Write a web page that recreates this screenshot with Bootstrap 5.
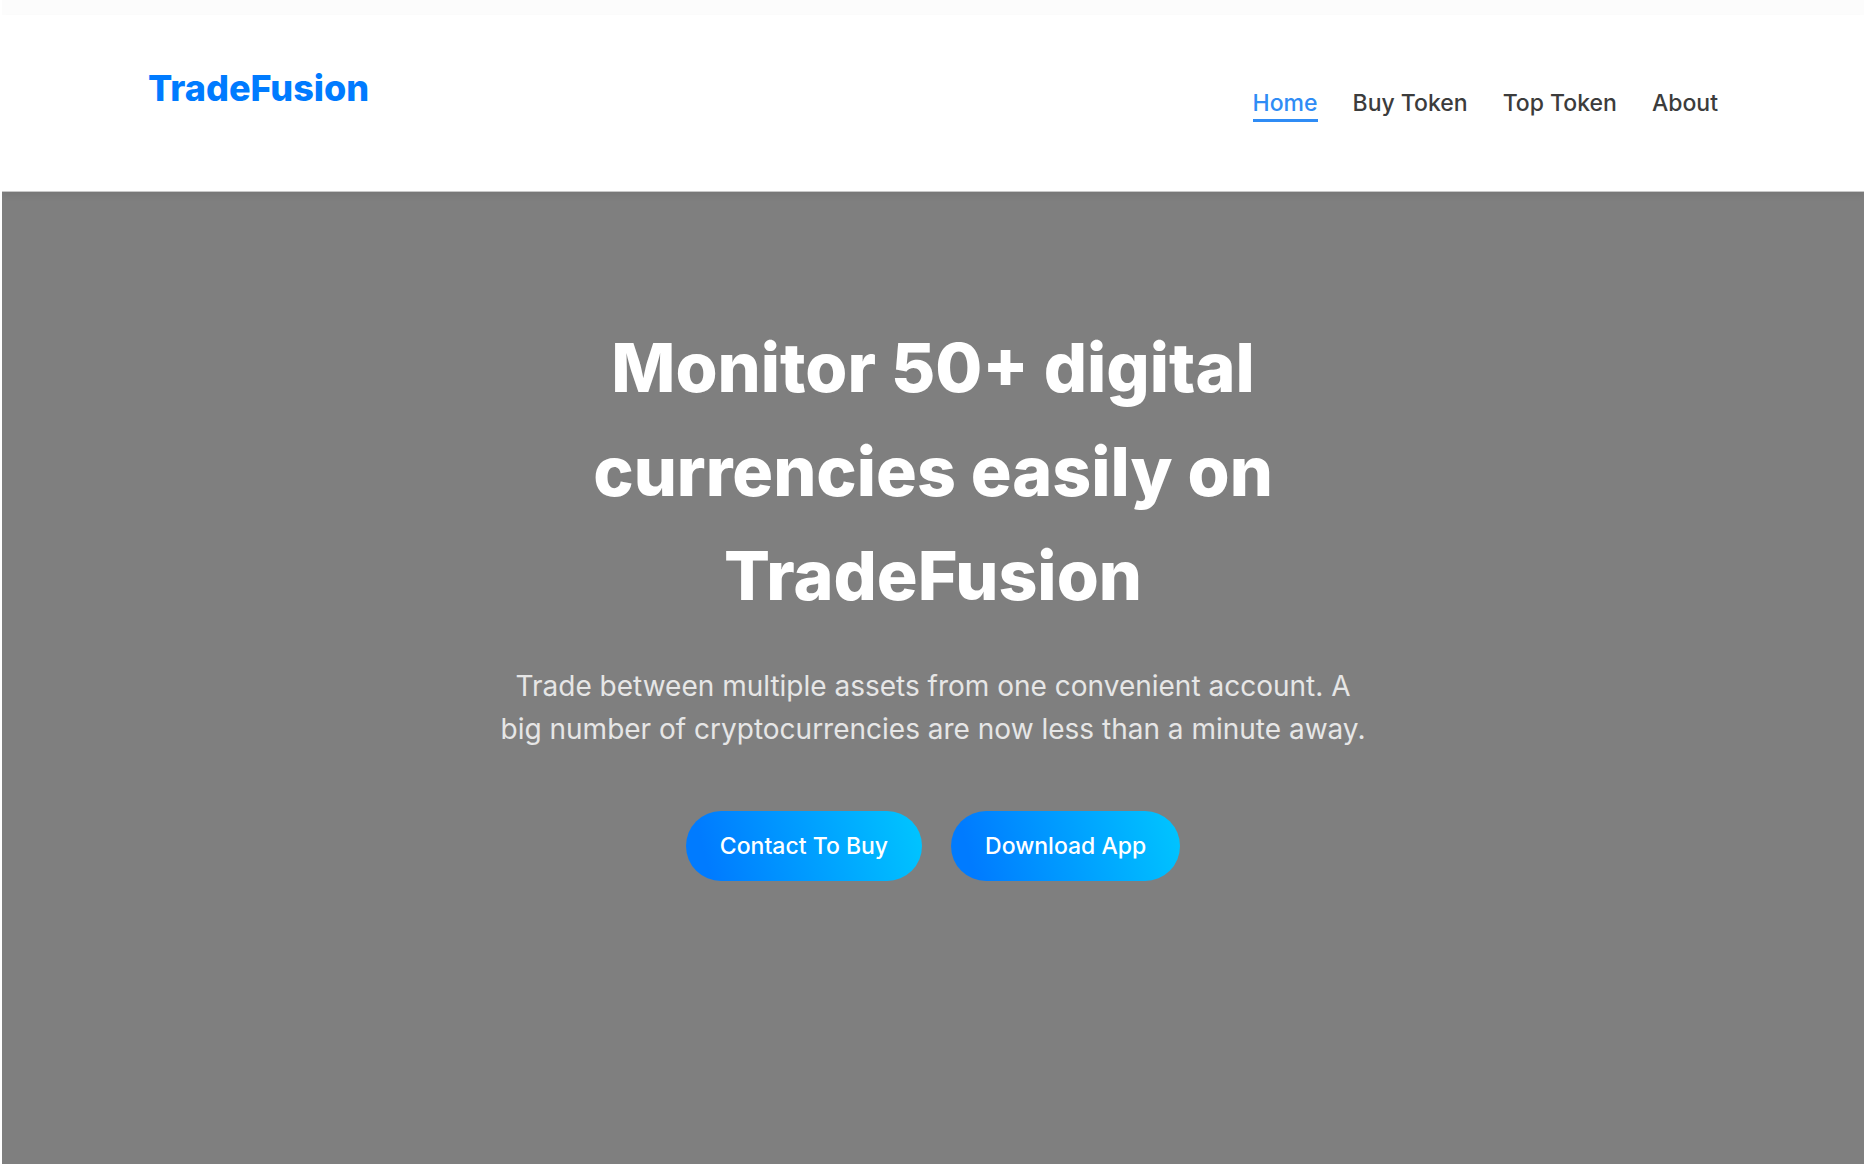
<!DOCTYPE html>
<html lang="en">
<head>
<meta charset="utf-8">
<meta name="viewport" content="width=device-width, initial-scale=1">
<title>TradeFusion</title>
<link href="https://cdn.jsdelivr.net/npm/bootstrap@5.3.0/dist/css/bootstrap.min.css" rel="stylesheet">
<style>
body{font-family:Inter,sans-serif;background:#7f7f7f;min-height:100vh;border:solid #fff;border-width:0 2px}
.top-strip{height:15px;background:#fcfcfc}
.site-header{padding:46px 146px 69px;background:#fff;border-bottom:1px solid #c8c8c8;box-shadow:0 4px 6px rgba(0,0,0,.06)}
.brand-link{font-size:36px;line-height:54px;font-weight:800;color:#007bff;text-decoration:none}
.site-nav{gap:35px;margin-top:26px}
.site-nav .nav-link{padding:0;font-size:23px;line-height:32px;font-weight:500;color:#3c3c3c;border-bottom:3px solid transparent}
.site-nav .nav-link.active{color:#2f8cf5;border-color:#2f8cf5}
.hero{padding:123px 16px;color:#fff}
.hero-copy{max-width:870px}
.hero h1{font-size:68px;line-height:104px;font-weight:800;max-width:740px;margin:0 auto 38px}
.hero p{font-size:28px;line-height:43px;color:#e6e6e6;margin-bottom:60px}
.hero-actions{gap:29px}
.hero .btn{border:0;border-radius:35px;padding:18px 34px;font-size:23px;line-height:34px;font-weight:500;color:#fff;background:linear-gradient(75deg,#007bff 10%,#00c6ff)}
</style>
</head>
<body>
<div class="top-strip"></div>
<header class="site-header">
<div class="d-flex flex-wrap justify-content-between align-items-start">
<a class="brand-link" href="#">TradeFusion</a>
<nav class="nav site-nav" aria-label="Main">
<a class="nav-link active" aria-current="page" href="#">Home</a>
<a class="nav-link" href="#">Buy Token</a>
<a class="nav-link" href="#">Top Token</a>
<a class="nav-link" href="#">About</a>
</nav>
</div>
</header>
<main class="hero text-center">
<div class="hero-copy mx-auto">
<h1>Monitor 50+ digital currencies easily on TradeFusion</h1>
<p>Trade between multiple assets from one convenient account. A big number of cryptocurrencies are now less than a minute away.</p>
<div class="d-flex flex-wrap justify-content-center hero-actions">
<button type="button" class="btn">Contact To Buy</button>
<button type="button" class="btn">Download App</button>
</div>
</div>
</main>
<script src="https://cdn.jsdelivr.net/npm/bootstrap@5.3.0/dist/js/bootstrap.bundle.min.js"></script>
</body>
</html>
